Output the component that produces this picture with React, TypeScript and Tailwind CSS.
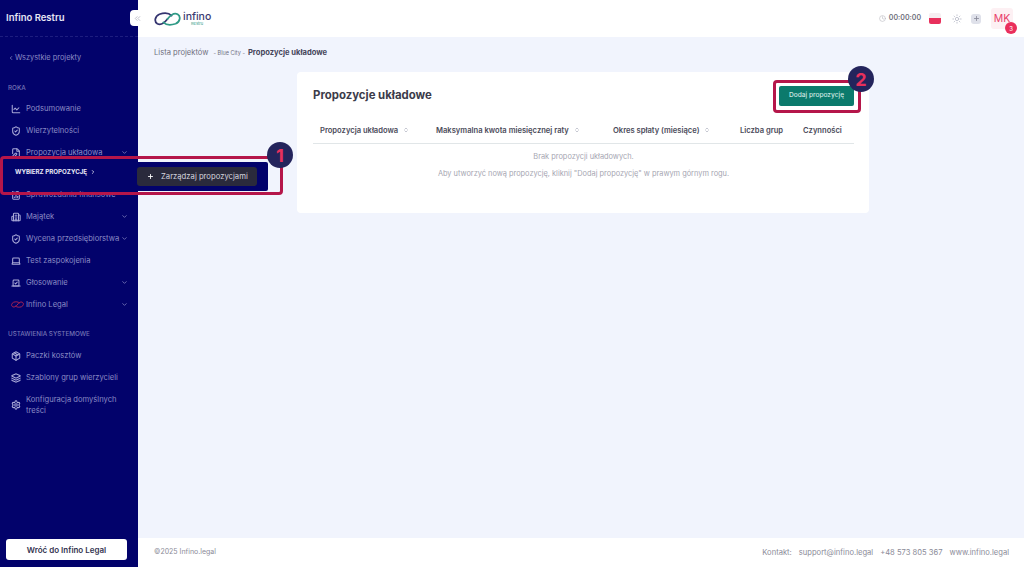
import {
  ChartLine,
  ChevronDown,
  ChevronRight,
  ChevronLeft,
  ChevronsLeft,
  FileChartColumn,
  Sun,
  Plus,
  Clock,
  ShieldCheck,
  FilePen,
  Building2,
  Laptop,
  Vote,
  Package,
  Layers,
  Settings,
  ChevronsUpDown,
} from "lucide-react";

const font = "font-['Inter','Liberation_Sans',sans-serif]";

function InfinityMark({ className, a, b }: { className: string; a: string; b: string }) {
  return (
    <svg viewBox="0 0 40 20" className={className} fill="none" strokeWidth="2.6" strokeLinecap="round">
      <path d="M26 5 C22 1 14 1 8 3 C1 6 0 14 5 17 C11 20 16 15 20 10" stroke={a} />
      <path d="M14 15 C18 19 26 19 32 17 C39 14 40 6 35 3 C29 0 24 5 20 10" stroke={b} />
    </svg>
  );
}

function NavItem({
  icon,
  label,
  chevron,
}: {
  icon: React.ReactNode;
  label: string;
  chevron?: boolean;
}) {
  return (
    <div className="flex h-[22px] items-center pl-[11px] pr-[10px] text-[7.6px] text-[#8a8ac4]">
      <span className="flex w-[15px] shrink-0 items-center">{icon}</span>
      <span className="flex-1 whitespace-nowrap">{label}</span>
      {chevron && <ChevronDown className="h-[7px] w-[7px] shrink-0" strokeWidth={2.5} />}
    </div>
  );
}

const ic = "h-[10px] w-[10px] text-[#a9a9d8]";

function Sidebar() {
  return (
    <aside className="flex h-full w-[138px] shrink-0 flex-col bg-[#02026b]">
      <div className="flex h-[37px] shrink-0 items-center border-b border-dashed border-[#1d1d7f] pl-[6px] text-[9.5px] font-semibold text-[#e6e6f5]">
        Infino Restru
      </div>
      <div className="mt-[15px] flex items-center gap-[1px] pl-[8px] text-[7.4px] text-[#8a8ac4]">
        <ChevronLeft className="h-[6px] w-[6px]" strokeWidth={3} />
        Wszystkie projekty
      </div>
      <div className="mt-[21px] pl-[8px] text-[6.3px] font-medium text-[#7474b4]">ROKA</div>
      <div className="mt-[4px]">
        <NavItem icon={<ChartLine className={ic} strokeWidth={2.5} />} label="Podsumowanie" />
        <NavItem icon={<ShieldCheck className={ic} strokeWidth={2.5} />} label="Wierzytelności" />
        <NavItem icon={<FilePen className={ic} strokeWidth={2.5} />} label="Propozycja układowa" chevron />
        <div className="h-[20px]" />
        <NavItem icon={<FileChartColumn className={ic} strokeWidth={2.5} />} label="Sprawozdania finansowe" />
        <NavItem icon={<Building2 className={ic} strokeWidth={2.5} />} label="Majątek" chevron />
        <NavItem icon={<ShieldCheck className={ic} strokeWidth={2.5} />} label="Wycena przedsiębiorstwa" chevron />
        <NavItem icon={<Laptop className={ic} strokeWidth={2.5} />} label="Test zaspokojenia" />
        <NavItem icon={<Vote className={ic} strokeWidth={2.5} />} label="Głosowanie" chevron />
        <NavItem
          icon={<InfinityMark className="h-[7px] w-[13px]" a="#c0284f" b="#c0284f" />}
          label="Infino Legal"
          chevron
        />
      </div>
      <div className="mt-[14px] pl-[8px] text-[6.3px] font-medium text-[#7474b4]">USTAWIENIA SYSTEMOWE</div>
      <div className="mt-[6px]">
        <NavItem icon={<Package className={ic} strokeWidth={2.5} />} label="Paczki kosztów" />
        <NavItem icon={<Layers className={ic} strokeWidth={2.5} />} label="Szablony grup wierzycieli" />
        <div className="flex items-center pl-[11px] pr-[10px] pt-[5px] text-[7.6px] leading-[11px] text-[#8a8ac4]">
          <span className="flex w-[15px] shrink-0 items-center">
            <Settings className={ic} strokeWidth={2.5} />
          </span>
          <span>Konfiguracja domyślnych treści</span>
        </div>
      </div>
      <div className="mt-auto pb-[7px] pl-[6px] pr-[11px]">
        <div className="flex h-[21px] items-center justify-center rounded-[3px] bg-white text-[8px] font-semibold text-[#33334f]">
          Wróć do Infino Legal
        </div>
      </div>
    </aside>
  );
}

function TopBar() {
  return (
    <header className="flex h-[37px] shrink-0 items-center bg-white pl-[16px] pr-[11px]">
      <div className="flex items-center gap-[2px]">
        <InfinityMark className="h-[14px] w-[27px]" a="#34346f" b="#2f9a86" />
        <div className="flex flex-col items-center leading-none">
          <span className="text-[10.5px] font-medium leading-[10px] text-[#3a3a70]">infino</span>
          <span className="text-[4px] leading-[4px] text-[#2f9a86]">Restru</span>
        </div>
      </div>
      <div className="ml-auto flex items-center">
        <Clock className="h-[7px] w-[7px] text-[#b8b8c0]" />
        <span className="ml-[3px] text-[7px] font-semibold text-[#6f6f7c]">00:00:00</span>
        <div className="ml-[8px] flex h-[11px] w-[12px] flex-col overflow-hidden rounded-[2px]">
          <div className="h-[5px] bg-[#f6eef1]" />
          <div className="flex-1 bg-[#e8305c]" />
        </div>
        <Sun className="ml-[11px] h-[10px] w-[10px] text-[#b9bcc9]" />
        <div className="ml-[9px] flex h-[10px] w-[10px] items-center justify-center rounded-[3px] bg-[#dfe1ea]">
          <Plus className="h-[7px] w-[7px] text-[#8b8d9c]" strokeWidth={3} />
        </div>
        <div className="relative ml-[10px] flex h-[21px] w-[22px] items-center justify-center rounded-[3px] bg-[#fdf0f3] text-[10.5px] text-[#e8406a]">
          MK
          <span className="absolute -bottom-[5px] -right-[4px] flex h-[12px] w-[12px] items-center justify-center rounded-full bg-[#ea2f5c] text-[6px] text-white">
            3
          </span>
        </div>
      </div>
    </header>
  );
}

const columns = [
  { label: "Propozycja układowa", sort: true },
  { label: "Maksymalna kwota miesięcznej raty", sort: true },
  { label: "Okres spłaty (miesiące)", sort: true },
  { label: "Liczba grup", sort: false },
  { label: "Czynności", sort: false },
];

function ProposalsCard() {
  return (
    <section className="ml-[143px] mt-[14px] h-[141px] w-[572px] rounded-[4px] bg-white pl-[16px] pr-[15px] pt-[13px]">
      <div className="flex h-[20px] items-center justify-between pt-[1px]">
        <h1 className="text-[11.4px] font-bold text-[#3b3b4a]">Propozycje układowe</h1>
        <button className="flex h-[20px] w-[75px] items-center justify-center rounded-[2px] bg-[#0b7a6c] text-[6.6px] font-medium text-[#cfe8e2]">
          Dodaj propozycję
        </button>
      </div>
      <div className="mt-[16px] grid h-[23px] grid-cols-[116px_177px_127px_63px_58px] items-center border-b border-[#e1e6e8] pb-[3px] pl-[7px] text-[7.6px] font-semibold text-[#4b4b5a]">
        {columns.map((c) => (
          <div key={c.label} className="flex items-center gap-[5px] whitespace-nowrap">
            {c.label}
            {c.sort && <ChevronsUpDown className="h-[6px] w-[6px] text-[#c6c8d2]" strokeWidth={4} />}
          </div>
        ))}
      </div>
      <p className="mt-[8px] text-center text-[7.4px] leading-[10px] text-[#a6a6b2]">Brak propozycji układowych.</p>
      <p className="mt-[7px] text-center text-[7.4px] leading-[10px] text-[#a6a6b2]">
        Aby utworzyć nową propozycję, kliknij "Dodaj propozycję" w prawym górnym rogu.
      </p>
    </section>
  );
}

function Footer() {
  return (
    <footer className="mt-auto flex h-[29px] shrink-0 items-center justify-between bg-white pl-[16px] pr-[15px] text-[7.6px] text-[#8b8b98]">
      <span className="text-[7px]">©2025 Infino.legal</span>
      <div className="flex gap-[7px]">
        <span>Kontakt:</span>
        <span>support@infino.legal</span>
        <span>+48 573 805 367</span>
        <span>www.infino.legal</span>
      </div>
    </footer>
  );
}

function Annotations() {
  return (
    <>
      {/* collapse handle */}
      <div className="absolute left-[130px] top-[10px] flex h-[16px] w-[14px] items-center justify-center rounded-l-[4px] bg-white">
        <ChevronsLeft className="h-[9px] w-[9px] text-[#bdbdc8]" strokeWidth={2.5} />
      </div>
      {/* submenu popup */}
      <div className="absolute left-[4px] top-[162px] flex h-[29px] w-[264px] items-center rounded-[2px] bg-[#02026b]">
        <span className="mb-[10px] ml-[11px] w-[122px] whitespace-nowrap text-[6.2px] font-bold text-[#e8e8f5]">
          WYBIERZ PROPOZYCJĘ
          <ChevronRight className="ml-[3px] inline h-[6px] w-[6px]" strokeWidth={3} />
        </span>
        <div className="flex h-[19px] w-[120px] items-center whitespace-nowrap rounded-[3px] bg-[#2a2a3c] pl-[10px] text-[7.7px] text-[#d5d5de]">
          <Plus className="mr-[7px] h-[7px] w-[7px] text-white" strokeWidth={3} />
          Zarządzaj propozycjami
        </div>
      </div>
      {/* red frames */}
      <div className="pointer-events-none absolute left-0 top-[156px] h-[39px] w-[283px] rounded-[4px] border-[3px] border-[#b5164a]" />
      <div className="pointer-events-none absolute left-[773px] top-[80px] h-[33px] w-[88px] rounded-[4px] border-[3px] border-[#b5164a]" />
      {/* step badges */}
      <div className="absolute left-[267px] top-[142px] flex h-[26px] w-[26px] items-center justify-center rounded-full bg-[#24245c] text-[18px] font-bold text-[#e8305c]">
        1
      </div>
      <div className="absolute left-[848px] top-[66px] flex h-[26px] w-[26px] items-center justify-center rounded-full bg-[#24245c] text-[18px] font-bold text-[#e8305c]">
        2
      </div>
    </>
  );
}

export default function App() {
  return (
    <div className={`relative flex h-[567px] w-[1024px] overflow-hidden bg-[#f1f4fd] ${font}`}>
      <Sidebar />
      <main className="flex min-w-0 flex-1 flex-col">
        <TopBar />
        <div className="pl-[16px] pt-[11px]">
          <div className="flex h-[10px] items-center gap-[3px] whitespace-nowrap text-[7.6px] text-[#70707e]">
            <span>Lista projektów</span>
            <span className="ml-[2px] text-[5.5px]">- Blue City -</span>
            <span className="font-bold text-[#45455a]">Propozycje układowe</span>
          </div>
          <ProposalsCard />
        </div>
        <Footer />
      </main>
      <Annotations />
    </div>
  );
}
